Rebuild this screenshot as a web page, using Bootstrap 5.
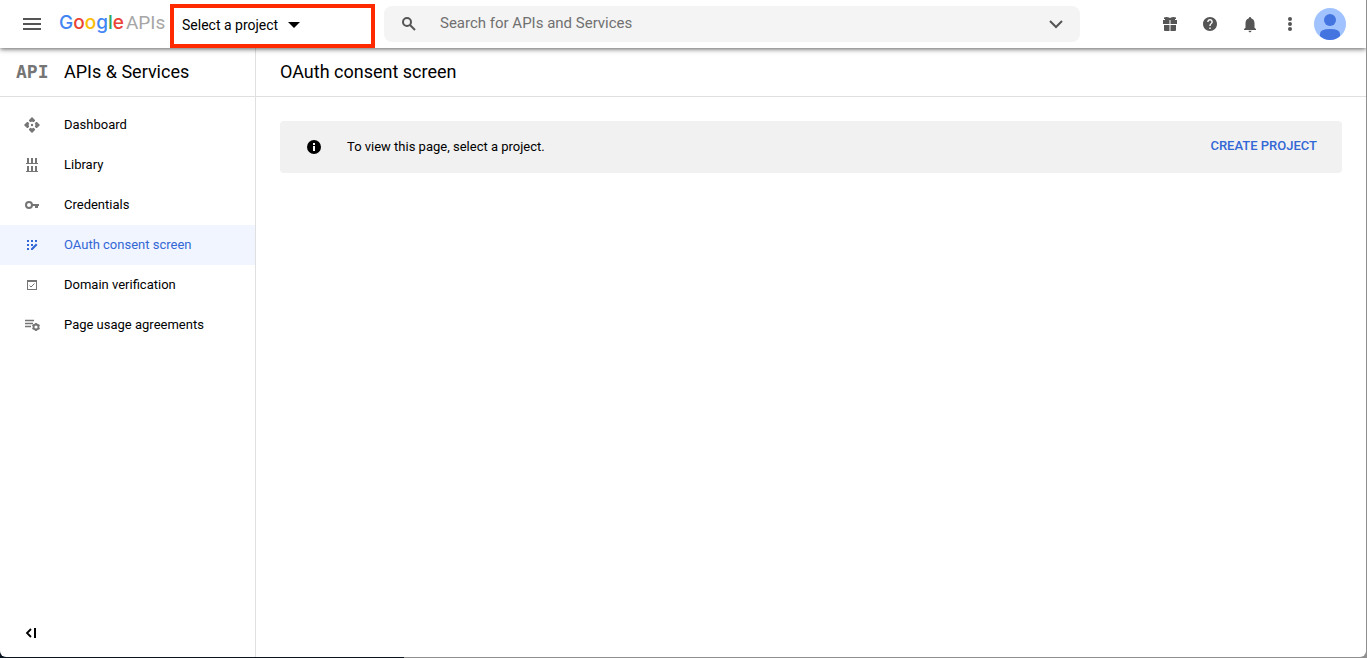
<!DOCTYPE html>
<html lang="en">
<head>
<meta charset="utf-8">
<meta name="viewport" content="width=device-width, initial-scale=1">
<title>OAuth consent screen – APIs &amp; Services</title>
<link href="https://cdn.jsdelivr.net/npm/bootstrap@5.3.0/dist/css/bootstrap.min.css" rel="stylesheet">
<style>
  body { font-family: Roboto, "Liberation Sans", sans-serif; font-size: 13px; line-height: 20px; color: #000; background: #fff; }
  svg { display: block; flex: none; }
  .desktop { min-height: 100vh; padding: 0 1px 1px 0; background: linear-gradient(90deg, #0a1420 404px, #8f8f8f 404px); }
  .app-window { background: #fff; border-radius: 0 0 6px 6px; }
  .topbar { height: 48px; padding-right: 20px; box-shadow: 0 1px 5px rgba(0,0,0,.65); z-index: 2; clip-path: inset(0 0 -12px 0); }
  .icon-btn { width: 40px; height: 40px; padding: 0; border: 0; background: none; color: #555; display: flex; align-items: center; justify-content: center; }
  .menu-btn { margin-left: 12px; }
  .brand { margin-left: 7px; width: 111px; height: 46px; color: #a6a6a6; font-size: 19px; text-decoration: none; white-space: nowrap; gap: 2px; }
  .brand-name { font-family: Inter, Roboto, sans-serif; font-size: 19px; font-weight: 500; }
  .g-blue { color: #4285f4; } .g-red { color: #ea4335; } .g-yellow { color: #fbbc05; } .g-green { color: #34a853; }
  .project-picker { width: 205px; height: 44px; margin-top: 4px; padding: 0 8px 2px; border: 4px solid #ff2a00; background: #fff; color: #000; font-size: 14px; gap: 10px; }
  .search-box { flex: 0 1 696px; height: 36px; margin: 6px 0 0 9px; padding: 0 12px 0 16px; border-radius: 8px; background: #f4f4f4; color: #555; }
  .search-box input { margin-left: 22px; font-size: 15px; color: #666; outline: 0; min-width: 0; height: 36px; padding: 0 0 2px; }
  .search-box input::placeholder { color: #707070; opacity: 1; }
  .side { width: 256px; border-right: 1px solid #e0e0e0; flex: none; }
  .title-row { height: 49px; border-bottom: 1px solid #e0e0e0; font-size: 18px; }
  .title-row h1, .title-row h2 { font-size: 18px; line-height: 24px; font-weight: 400; }
  .api-mark { width: 48px; padding-left: 16px; margin-right: 16px; font: 700 18px/24px "DejaVu Sans Mono", monospace; color: #757575; }
  .side-link { height: 40px; padding-left: 23px; gap: 23px; color: #000; text-decoration: none; }
  .side-link svg { color: #757575; }
  .side-link.active, .side-link.active svg { color: #3367d6; }
  .side-link.active { background: #f0f5ff; }
  .collapse-btn { width: 38px; margin: 0 0 4px 12px; color: #000; }
  .notice { margin: 24px; height: 52px; padding: 0 25px; border-radius: 4px; background: #f1f1f1; }
  .notice svg { margin-right: 24px; }
  .create-link { border: 0; padding: 0 0 2px; background: none; color: #3367d6; font-weight: 500; }
</style>
</head>
<body>
<div class="desktop d-flex">
<div class="app-window d-flex flex-column flex-grow-1">
  <header class="topbar d-flex align-items-start position-relative bg-white">
    <button class="icon-btn menu-btn mt-1" type="button" aria-label="Main menu">
      <svg width="18" height="12" viewBox="0 0 18 12" fill="currentColor"><path d="M0 0h18v2H0zM0 5h18v2H0zM0 10h18v2H0z"/></svg>
    </button>
    <a class="brand d-flex align-items-center" href="#"><span class="brand-name"><span class="g-blue">G</span><span class="g-red">o</span><span class="g-yellow">o</span><span class="g-blue">g</span><span class="g-green">l</span><span class="g-red">e</span></span><span>APIs</span></a>
    <button class="project-picker d-flex align-items-center" type="button"><span>Select a project</span>
      <svg width="12" height="6" viewBox="0 0 12 6"><path d="M0 0h12L6 6z"/></svg>
    </button>
    <form class="search-box d-flex align-items-center">
      <svg width="18" height="18" viewBox="0 0 18 18" fill="none" stroke="currentColor" stroke-width="2"><circle cx="7" cy="7" r="4"/><path d="m10 10 5 5"/></svg>
      <input class="border-0 bg-transparent flex-grow-1" type="text" placeholder="Search for APIs and Services" aria-label="Search for APIs and Services">
      <button class="border-0 bg-transparent p-0" type="button" aria-label="Expand search">
        <svg width="24" height="24" viewBox="0 0 24 24" fill="none" stroke="#555" stroke-width="2"><path d="m6 9 6 6 6-6"/></svg>
      </button>
    </form>
    <div class="d-flex ms-auto mt-1">
      <button class="icon-btn" type="button" aria-label="Offers">
        <svg width="14" height="14" viewBox="0 0 14 14" fill="currentColor"><path d="M1 .5Q4-.5 7 1q3-1.500 6-.5V2H1zM0 3h6.500v4H0zM7.500 3H14v4H7.500zM1 8h5.500v6H2q-1 0-1-1zM7.500 8H13v5q0 1-1 1H7.500z"/><path d="M2 2h10v1H2z"/></svg>
      </button>
      <button class="icon-btn" type="button" aria-label="Help">
        <svg width="14" height="14" viewBox="2 2 20 20" fill="currentColor"><path d="M12 2C6.480 2 2 6.480 2 12s4.480 10 10 10 10-4.480 10-10S17.520 2 12 2zm1 17h-2v-2h2v2zm2.070-7.750-.9.920C13.450 12.900 13 13.500 13 15h-2v-.5c0-1.100.45-2.100 1.170-2.830l1.240-1.260c.37-.36.59-.86.59-1.410 0-1.100-.9-2-2-2s-2 .9-2 2H8c0-2.210 1.790-4 4-4s4 1.790 4 4c0 .88-.36 1.680-.93 2.250z"/></svg>
      </button>
      <button class="icon-btn" type="button" aria-label="Notifications">
        <svg width="18" height="18" viewBox="0 0 24 24" fill="currentColor"><path d="M12 23c1.100 0 2-.9 2-2h-4c0 1.100.9 2 2 2zm6-6v-6c0-3.400-1.600-5.900-4.500-6.600V4a1.500 1.500 0 0 0-3 0v.4C7.600 5.100 6 7.600 6 11v6l-2 1.500V20h16v-1.500z"/></svg>
      </button>
      <button class="icon-btn" type="button" aria-label="More options">
        <svg width="4" height="14" viewBox="0 0 4 14" fill="currentColor"><circle cx="2" cy="2" r="2"/><circle cx="2" cy="7" r="2"/><circle cx="2" cy="12" r="2"/></svg>
      </button>
      <button class="border-0 bg-transparent p-0 ms-1" type="button" aria-label="Account">
        <svg width="32" height="32" viewBox="0 0 32 32"><circle cx="16" cy="16" r="16" fill="#a0c3ff"/><circle cx="16" cy="12" r="6" fill="#4374e0"/><path fill="#4374e0" d="M6 28v-2q0-5 10-5t10 5v2q-4 4-10 4T6 28z"/></svg>
      </button>
    </div>
  </header>
  <div class="d-flex flex-grow-1">
    <aside class="side d-flex flex-column">
      <div class="title-row d-flex align-items-center"><span class="api-mark">API</span><h2 class="m-0">APIs &amp; Services</h2></div>
      <nav class="d-flex flex-column pt-2">
        <a class="side-link d-flex align-items-center" href="#"><svg width="18" height="18" viewBox="0 0 18 18" fill="currentColor"><path d="m9 1 3 3v1l-1.500 1.200L9 5.500l-1.500.7L6 5V4zM9 17l3-3v-1l-1.500-1.200-1.500.7-1.500-.7L6 13v1zM1 9l3-3h1l1.200 1.500L5.500 9l.7 1.500L5 12H4zM17 9l-3-3h-1l-1.200 1.500.7 1.500-.7 1.500L13 12h1z"/><circle cx="9" cy="9" r="1.200"/></svg>Dashboard</a>
        <a class="side-link d-flex align-items-center" href="#"><svg width="18" height="18" viewBox="0 0 18 18" fill="currentColor"><path d="M4 2h2v5h2V2h2v5h2V2h2v5h1v1H3V7h1zM4 10h2v5h2v-5h2v5h2v-5h2v5h1v1H3v-1h1z"/></svg>Library</a>
        <a class="side-link d-flex align-items-center" href="#"><svg width="18" height="18" viewBox="0 0 18 18" fill="none" stroke="currentColor" stroke-width="2"><circle cx="6" cy="9" r="3"/><path d="M9 9h7"/><path stroke-width="3" d="M13.500 9v3"/></svg>Credentials</a>
        <a class="side-link active d-flex align-items-center" href="#" aria-current="page"><svg width="18" height="18" viewBox="0 0 18 18" fill="currentColor"><path d="M4 4h2v2H4zM8 4h2v2H8zM12 4h2v2h-2zM4 8h2v2H4zM8 8h2v2H8zM4 12h2v2H4zM8 12.500 13 7.500l1.500 1.500-5 5H8z"/></svg>OAuth consent screen</a>
        <a class="side-link d-flex align-items-center" href="#"><svg width="18" height="18" viewBox="0 0 18 18" fill="currentColor"><path fill-rule="evenodd" d="M4 4h10v10H4zM5 6v7h8V6z"/><path fill="none" stroke="currentColor" d="m6.500 9.500 1.500 1.500 3.500-3.500"/></svg>Domain verification</a>
        <a class="side-link d-flex align-items-center" href="#"><svg width="18" height="18" viewBox="0 0 18 18" fill="none" stroke="currentColor"><path stroke-width="1.300" d="M2 4.500h9M2 7.500h8M2 10.500h6"/><circle cx="13" cy="11" r="2.500" stroke-width="1.800"/><path stroke-width="1.800" d="M13 7v1.500M13 13.500V15M9.500 9l1.300.8M15.200 12.200l1.300.8M9.500 13l1.300-.8M15.200 9.800l1.300-.8"/></svg>Page usage agreements</a>
      </nav>
      <button class="icon-btn collapse-btn mt-auto" type="button" aria-label="Collapse menu"><svg width="12" height="10" viewBox="0 0 12 10" fill="none" stroke="currentColor"><path stroke-width="1.800" d="M6 1 2 5l4 4"/><path stroke-width="2" d="M10 0v10"/></svg></button>
    </aside>
    <main class="flex-grow-1">
      <div class="title-row d-flex align-items-center ps-4"><h1 class="m-0">OAuth consent screen</h1></div>
      <div class="notice d-flex align-items-center" role="status">
        <svg width="18" height="18" viewBox="0 0 18 18"><circle cx="9" cy="9" r="7"/><path fill="#fff" d="M8 5h2v2H8zM8 8h2v5H8z"/></svg>
        <span>To view this page, select a project.</span>
        <button class="create-link ms-auto" type="button">CREATE PROJECT</button>
      </div>
    </main>
  </div>
</div>
</div>
<script src="https://cdn.jsdelivr.net/npm/bootstrap@5.3.0/dist/js/bootstrap.bundle.min.js"></script>
</body>
</html>
